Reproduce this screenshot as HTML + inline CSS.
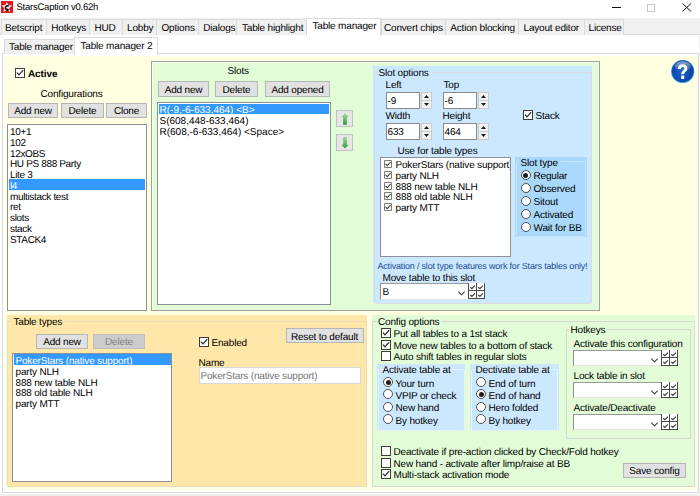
<!DOCTYPE html>
<html><head><meta charset="utf-8"><style>
html,body{margin:0;padding:0;width:700px;height:496px;overflow:hidden;background:#fff;position:relative}
body div{position:absolute;box-sizing:content-box}
svg{display:block}
.t{font-family:"Liberation Sans", sans-serif;font-size:10px;line-height:11px;white-space:nowrap;color:#000;text-rendering:geometricPrecision;letter-spacing:-0.18px}
.tab{background:#F0F0F0;border:1px solid #DADADA;border-bottom:none}
.btn{background:#E1E1E1;border:1px solid #B6B6B6}
.btn.dis{background:#CCCCCC;border-color:#BFBFBF}
.cb{background:#fff;border:1px solid #3c3c3c}
.rd{width:8px;height:8px;border-radius:50%;background:#fff;border:1px solid #505050}
.lb{background:#fff;border:1px solid #8E9096}
.edit{background:#fff;border:1px solid #8A8A8A}
.cmb{background:#fff;border:1px solid #E4E4E4;border-left-color:#8E8E8E;border-top-color:#9A9A9A;border-right:none}
.spin{background:#F2F2F2;border:1px solid #CACACA}
.pnl{border:1px solid #A0A0A0}
.grp{border:1px solid #DCDCDC;border-radius:2px}
</style></head><body>
<div style="left:1px;top:1px;width:12px;height:12px;"><svg width="12" height="12" viewBox="0 0 12 12"><rect width="12" height="12" fill="#E4161E"/><path d="M5.8 0.9 L7.3 4.2 L11.1 4.4 L8.2 7.1 L9.2 10.9 L5.8 9 L2.4 10.9 L3.4 7.1 L0.5 4.4 L4.3 4.2 Z" fill="#fff"/><path d="M7.7 5.3 A2 2 0 1 0 7.9 8.3" stroke="#111" stroke-width="1.6" fill="none"/><circle cx="6.3" cy="8.6" r="1" fill="#111"/></svg></div>
<div class="t" style="left:16.5px;top:2px;font-size:9.5px;letter-spacing:-0.24px">StarsCaption v0.62h</div>
<div style="left:612px;top:7px;width:9px;height:1px;background:#111"></div>
<div style="left:647px;top:4px;width:6px;height:6px;border:1px solid #c8c8c8"></div>
<div style="left:682px;top:3px;width:10px;height:9px;"><svg width="10" height="9" viewBox="0 0 10 9"><path d="M0.5 0.5 L9 8.5 M9 0.5 L0.5 8.5" stroke="#111" stroke-width="1"/></svg></div>
<div style="left:0px;top:18px;width:700px;height:16px;background:#F0F0F0"></div>
<div style="left:0px;top:34px;width:700px;height:1px;background:#DADADA"></div>
<div class="tab" style="left:1px;top:19px;width:44px;height:15px;"></div>
<div class="t" style="left:5.0px;top:23px;">Betscript</div>
<div class="tab" style="left:46px;top:19px;width:42px;height:15px;"></div>
<div class="t" style="left:51.25px;top:23px;">Hotkeys</div>
<div class="tab" style="left:89px;top:19px;width:32px;height:15px;"></div>
<div class="t" style="left:94.5px;top:23px;">HUD</div>
<div class="tab" style="left:122px;top:19px;width:33px;height:15px;"></div>
<div class="t" style="left:127.0px;top:23px;">Lobby</div>
<div class="tab" style="left:156px;top:19px;width:41px;height:15px;"></div>
<div class="t" style="left:161.5px;top:23px;">Options</div>
<div class="tab" style="left:198px;top:19px;width:37px;height:15px;"></div>
<div class="t" style="left:203.25px;top:23px;">Dialogs</div>
<div class="tab" style="left:236px;top:19px;width:70px;height:15px;"></div>
<div class="t" style="left:242.0px;top:23px;">Table highlight</div>
<div class="tab" style="left:381px;top:19px;width:63px;height:15px;"></div>
<div class="t" style="left:384.0px;top:23px;">Convert chips</div>
<div class="tab" style="left:445px;top:19px;width:72px;height:15px;"></div>
<div class="t" style="left:450.25px;top:23px;">Action blocking</div>
<div class="tab" style="left:518px;top:19px;width:65px;height:15px;"></div>
<div class="t" style="left:523.5px;top:23px;">Layout editor</div>
<div class="tab" style="left:584px;top:19px;width:38px;height:15px;"></div>
<div class="t" style="left:588.5px;top:23px;">License</div>
<div style="left:306px;top:18px;width:73px;height:17px;background:#fff;border:1px solid #DADADA;border-bottom:none"></div>
<div class="t" style="left:312.5px;top:21px;">Table manager</div>
<div style="left:2px;top:53px;width:695px;height:438px;border:1px solid #DADADA;background:#fff"></div>
<div class="tab" style="left:4px;top:39px;width:69px;height:14px;"></div>
<div class="t" style="left:9.0px;top:42px;">Table manager</div>
<div style="left:74px;top:37px;width:82px;height:17px;background:#fff;border:1px solid #DADADA;border-bottom:none"></div>
<div class="t" style="left:80.5px;top:41px;">Table manager 2</div>
<div style="left:5px;top:56px;width:692px;height:434px;background:#FFFFE1"></div>
<div style="left:671px;top:60px;width:24px;height:24px;"><svg width="24" height="24" viewBox="0 0 24 24"><defs><radialGradient id="hg" cx="0.45" cy="0.6" r="0.6"><stop offset="0" stop-color="#1d62c4"/><stop offset="0.75" stop-color="#0a46a8"/><stop offset="1" stop-color="#083a8a"/></radialGradient><linearGradient id="hl" x1="0" y1="0" x2="0" y2="1"><stop offset="0" stop-color="#fff" stop-opacity="0.55"/><stop offset="1" stop-color="#fff" stop-opacity="0"/></linearGradient></defs><circle cx="11.7" cy="11.5" r="11.6" fill="#3aa0e0"/><circle cx="11.7" cy="11.3" r="10.8" fill="url(#hg)"/><ellipse cx="11.7" cy="6.5" rx="8" ry="5.2" fill="url(#hl)"/><path d="M6.8 9 C6.8 5.6 9.3 4.3 11.8 4.3 C14.6 4.3 16.4 6.1 16.4 8.4 C16.4 11.2 13.2 11.6 13.2 14.2 L10.3 14.2 C10.3 10.6 13.4 10.3 13.4 8.5 C13.4 7.6 12.7 7 11.8 7 C10.6 7 9.9 7.8 9.9 9 Z" fill="#fff"/><rect x="10.2" y="15.6" width="3" height="3.4" fill="#fff"/></svg></div>
<div class="cb" style="left:14.5px;top:68px;width:8px;height:8px;"><svg width="8" height="8" viewBox="0 0 8 8" style="position:absolute;left:0;top:0"><path d="M1 3.6 L3 5.8 L7.2 1.2" fill="none" stroke="#2a2a2a" stroke-width="1.25"/></svg></div>
<div class="t" style="left:28.0px;top:69px;font-weight:bold;letter-spacing:-0.1px">Active</div>
<div class="t" style="left:40.5px;top:89px;">Configurations</div>
<div class="btn" style="left:8px;top:103px;width:48px;height:13px;"></div>
<div class="t" style="left:8px;top:106px;width:50px;text-align:center;">Add new</div>
<div class="btn" style="left:61px;top:103px;width:41px;height:13px;"></div>
<div class="t" style="left:61px;top:106px;width:43px;text-align:center;">Delete</div>
<div class="btn" style="left:106px;top:103px;width:39px;height:13px;"></div>
<div class="t" style="left:106px;top:106px;width:41px;text-align:center;">Clone</div>
<div class="lb" style="left:7px;top:124px;width:138px;height:185px;"></div>
<div class="t" style="left:10.0px;top:127px;letter-spacing:-0.35px">10+1</div>
<div class="t" style="left:10.0px;top:138px;letter-spacing:-0.35px">102</div>
<div class="t" style="left:10.0px;top:149px;letter-spacing:-0.35px">12xOBS</div>
<div class="t" style="left:10.0px;top:159px;letter-spacing:-0.35px">HU PS 888 Party</div>
<div class="t" style="left:10.0px;top:170px;letter-spacing:-0.35px">Lite 3</div>
<div style="left:9px;top:179px;width:136px;height:11px;background:#3399FF"></div>
<div class="t" style="left:10.0px;top:181px;color:#fff;letter-spacing:-0.35px">l4</div>
<div class="t" style="left:10.0px;top:192px;letter-spacing:-0.35px">multistack test</div>
<div class="t" style="left:10.0px;top:202px;letter-spacing:-0.35px">ret</div>
<div class="t" style="left:10.0px;top:213px;letter-spacing:-0.35px">slots</div>
<div class="t" style="left:10.0px;top:224px;letter-spacing:-0.35px">stack</div>
<div class="t" style="left:10.0px;top:235px;letter-spacing:-0.35px">STACK4</div>
<div class="pnl" style="left:151px;top:61px;width:447px;height:248px;background:#E1FCD6;box-shadow:inset 1px 1px 0 #F4FFEE"></div>
<div class="t" style="left:227.5px;top:66px;">Slots</div>
<div class="btn" style="left:158px;top:81px;width:49px;height:14px;"></div>
<div class="t" style="left:158px;top:85px;width:51px;text-align:center;">Add new</div>
<div class="btn" style="left:215px;top:81px;width:41px;height:14px;"></div>
<div class="t" style="left:215px;top:85px;width:43px;text-align:center;">Delete</div>
<div class="btn" style="left:265px;top:81px;width:63px;height:14px;"></div>
<div class="t" style="left:265px;top:85px;width:65px;text-align:center;">Add opened</div>
<div class="lb" style="left:157px;top:102px;width:172px;height:200.5px;"></div>
<div style="left:159px;top:103.5px;width:170px;height:10.5px;background:#3399FF"></div>
<div class="t" style="left:159.5px;top:105px;color:#fff;letter-spacing:0px">R(-9,-6-633,464) &lt;B&gt;</div>
<div class="t" style="left:159.5px;top:116px;letter-spacing:0px">S(608,448-633,464)</div>
<div class="t" style="left:159.5px;top:127px;letter-spacing:0px">R(608,-6-633,464) &lt;Space&gt;</div>
<div style="left:0;top:0;width:0;height:0"><svg width="0" height="0"><defs><linearGradient id="ag" x1="0" y1="0" x2="0" y2="1"><stop offset="0" stop-color="#9ddc9a"/><stop offset="1" stop-color="#2f9a45"/></linearGradient><linearGradient id="ag2" x1="0" y1="1" x2="0" y2="0"><stop offset="0" stop-color="#9ddc9a"/><stop offset="1" stop-color="#2f9a45"/></linearGradient></defs></svg></div>
<div class="btn" style="left:336px;top:110px;width:15px;height:15px;background:#E6E6E6;border-color:#C2C2C2"></div>
<div style="left:340px;top:113px;width:10px;height:12px;"><svg width="10" height="12" viewBox="0 0 10 12"><path d="M1.4 4 L5 0.3 L8.6 4 L6.9 4 L6.9 11.3 Q6.9 11.8 6.4 11.8 L3.6 11.8 Q3.1 11.8 3.1 11.3 L3.1 4 Z" fill="url(#ag)"/></svg></div>
<div class="btn" style="left:336px;top:134px;width:15px;height:15px;background:#E6E6E6;border-color:#C2C2C2"></div>
<div style="left:340px;top:137px;width:10px;height:12px;"><svg width="10" height="12" viewBox="0 0 10 12"><path d="M1.4 7.8 L5 11.5 L8.6 7.8 L6.9 7.8 L6.9 0.5 Q6.9 0 6.4 0 L3.6 0 Q3.1 0 3.1 0.5 L3.1 7.8 Z" fill="url(#ag)"/></svg></div>
<div style="left:373px;top:66px;width:219px;height:237px;background:#CCE8FF"></div>
<div class="grp" style="left:374px;top:72px;width:216px;height:230px;"></div>
<div style="left:377px;top:67px;width:55px;height:10px;background:#CCE8FF"></div>
<div class="t" style="left:378.5px;top:68px;">Slot options</div>
<div class="t" style="left:385.5px;top:80px;">Left</div>
<div class="t" style="left:443.5px;top:80px;">Top</div>
<div class="edit" style="left:386px;top:92px;width:32px;height:15px;"></div>
<div class="t" style="left:387.5px;top:96px;">-9</div>
<div class="spin" style="left:421px;top:92px;width:9px;height:7px;"><svg width="5" height="3" style="position:absolute;left:2.0px;top:2.0px"><path d="M0 3 L2.5 0 L5 3 Z" fill="#1a1a1a"/></svg></div>
<div class="spin" style="left:421px;top:100px;width:9px;height:7px;"><svg width="5" height="3" style="position:absolute;left:2.0px;top:2.0px"><path d="M0 0 L2.5 3 L5 0 Z" fill="#1a1a1a"/></svg></div>
<div class="edit" style="left:443px;top:92px;width:32px;height:15px;"></div>
<div class="t" style="left:444.5px;top:96px;">-6</div>
<div class="spin" style="left:478px;top:92px;width:9px;height:7px;"><svg width="5" height="3" style="position:absolute;left:2.0px;top:2.0px"><path d="M0 3 L2.5 0 L5 3 Z" fill="#1a1a1a"/></svg></div>
<div class="spin" style="left:478px;top:100px;width:9px;height:7px;"><svg width="5" height="3" style="position:absolute;left:2.0px;top:2.0px"><path d="M0 0 L2.5 3 L5 0 Z" fill="#1a1a1a"/></svg></div>
<div class="t" style="left:385.5px;top:111px;">Width</div>
<div class="t" style="left:442.5px;top:111px;">Height</div>
<div class="edit" style="left:386px;top:123px;width:32px;height:15px;"></div>
<div class="t" style="left:387.5px;top:127px;">633</div>
<div class="spin" style="left:421px;top:123px;width:9px;height:7px;"><svg width="5" height="3" style="position:absolute;left:2.0px;top:2.0px"><path d="M0 3 L2.5 0 L5 3 Z" fill="#1a1a1a"/></svg></div>
<div class="spin" style="left:421px;top:131px;width:9px;height:7px;"><svg width="5" height="3" style="position:absolute;left:2.0px;top:2.0px"><path d="M0 0 L2.5 3 L5 0 Z" fill="#1a1a1a"/></svg></div>
<div class="edit" style="left:443px;top:123px;width:32px;height:15px;"></div>
<div class="t" style="left:444.5px;top:127px;">464</div>
<div class="spin" style="left:478px;top:123px;width:9px;height:7px;"><svg width="5" height="3" style="position:absolute;left:2.0px;top:2.0px"><path d="M0 3 L2.5 0 L5 3 Z" fill="#1a1a1a"/></svg></div>
<div class="spin" style="left:478px;top:131px;width:9px;height:7px;"><svg width="5" height="3" style="position:absolute;left:2.0px;top:2.0px"><path d="M0 0 L2.5 3 L5 0 Z" fill="#1a1a1a"/></svg></div>
<div class="cb" style="left:523px;top:109.5px;width:8px;height:8px;"><svg width="8" height="8" viewBox="0 0 8 8" style="position:absolute;left:0;top:0"><path d="M1 3.6 L3 5.8 L7.2 1.2" fill="none" stroke="#2a2a2a" stroke-width="1.25"/></svg></div>
<div class="t" style="left:535.5px;top:111px;">Stack</div>
<div class="t" style="left:397.5px;top:146px;">Use for table types</div>
<div class="lb" style="left:380px;top:157px;width:129px;height:98px;"></div>
<div style="left:381px;top:158px;width:129px;height:60px;overflow:hidden">
<div style="left:3px;top:2px;width:8px;height:8px;"><svg width="8" height="8" viewBox="0 0 8 8"><path d="M0.5 0.5 H7.5 V7.5 H0.5 Z" fill="#fff" stroke="#7a7a7a" stroke-width="1"/><path d="M1.6 3.9 L3.3 5.6 L6.6 2" fill="none" stroke="#3a3a3a" stroke-width="1.1"/></svg></div>
<div class="t" style="left:14.5px;top:2px;">PokerStars (native support)</div>
<div style="left:3px;top:13px;width:8px;height:8px;"><svg width="8" height="8" viewBox="0 0 8 8"><path d="M0.5 0.5 H7.5 V7.5 H0.5 Z" fill="#fff" stroke="#7a7a7a" stroke-width="1"/><path d="M1.6 3.9 L3.3 5.6 L6.6 2" fill="none" stroke="#3a3a3a" stroke-width="1.1"/></svg></div>
<div class="t" style="left:14.5px;top:13px;">party NLH</div>
<div style="left:3px;top:24px;width:8px;height:8px;"><svg width="8" height="8" viewBox="0 0 8 8"><path d="M0.5 0.5 H7.5 V7.5 H0.5 Z" fill="#fff" stroke="#7a7a7a" stroke-width="1"/><path d="M1.6 3.9 L3.3 5.6 L6.6 2" fill="none" stroke="#3a3a3a" stroke-width="1.1"/></svg></div>
<div class="t" style="left:14.5px;top:24px;">888 new table NLH</div>
<div style="left:3px;top:34px;width:8px;height:8px;"><svg width="8" height="8" viewBox="0 0 8 8"><path d="M0.5 0.5 H7.5 V7.5 H0.5 Z" fill="#fff" stroke="#7a7a7a" stroke-width="1"/><path d="M1.6 3.9 L3.3 5.6 L6.6 2" fill="none" stroke="#3a3a3a" stroke-width="1.1"/></svg></div>
<div class="t" style="left:14.5px;top:34px;">888 old table NLH</div>
<div style="left:3px;top:45px;width:8px;height:8px;"><svg width="8" height="8" viewBox="0 0 8 8"><path d="M0.5 0.5 H7.5 V7.5 H0.5 Z" fill="#fff" stroke="#7a7a7a" stroke-width="1"/><path d="M1.6 3.9 L3.3 5.6 L6.6 2" fill="none" stroke="#3a3a3a" stroke-width="1.1"/></svg></div>
<div class="t" style="left:14.5px;top:45px;">party MTT</div>
</div>
<div style="left:515px;top:157px;width:71.5px;height:80px;background:#A9D8FA"></div>
<div class="grp" style="left:516px;top:161px;width:68px;height:74px;border-color:#c8e4f8"></div>
<div style="left:519px;top:157px;width:42px;height:10px;background:#A9D8FA"></div>
<div class="t" style="left:520.5px;top:158px;">Slot type</div>
<div class="rd" style="left:520.5px;top:170.10000000000002px;"><div style="position:absolute;left:1.5px;top:1.5px;width:5px;height:5px;border-radius:50%;background:#1e1e1e"></div></div>
<div class="t" style="left:533.5px;top:171px;">Regular</div>
<div class="rd" style="left:520.5px;top:183.10000000000002px;"></div>
<div class="t" style="left:533.5px;top:184px;">Observed</div>
<div class="rd" style="left:520.5px;top:196.10000000000002px;"></div>
<div class="t" style="left:533.5px;top:197px;">Sitout</div>
<div class="rd" style="left:520.5px;top:209.10000000000002px;"></div>
<div class="t" style="left:533.5px;top:210px;">Activated</div>
<div class="rd" style="left:520.5px;top:222.10000000000002px;"></div>
<div class="t" style="left:533.5px;top:223px;">Wait for BB</div>
<div class="t" style="left:377.5px;top:261px;color:#1B4D96;font-size:9px;letter-spacing:-0.19px">Activation / slot type features work for Stars tables only!</div>
<div class="t" style="left:382.5px;top:273px;">Move table to this slot</div>
<div class="cmb" style="left:380px;top:283px;width:87px;height:15px;"><svg width="7" height="5" viewBox="0 0 7 5" style="position:absolute;right:3px;top:7px"><path d="M0.3 0.6 L3.5 3.8 L6.7 0.6" fill="none" stroke="#3a3a3a" stroke-width="1.1"/></svg></div>
<div class="t" style="left:382.5px;top:287px;">B</div>
<div style="left:468px;top:283px;width:17px;height:16px;"><svg width="18" height="16" viewBox="0 0 18 16" style="position:absolute;left:0;top:0">
<rect x="0.5" y="0" width="16" height="15.5" fill="#fff"/>
<path d="M0.5 0 V16 M8.5 0 V16 M16.5 0 V16 M0 7.5 H17 M0 15.5 H17" stroke="#4a4a4a" stroke-width="1" fill="none"/>
<path d="M2.3 4.2 L3.9 5.6 L6.9 2.6 M10.3 4.2 L11.9 5.6 L14.9 2.6 M2.3 12 L3.9 13.4 L6.9 10.4 M10.3 12 L11.9 13.4 L14.9 10.4" stroke="#404040" stroke-width="1.15" fill="none"/>
</svg></div>
<div style="left:7px;top:314.5px;width:360px;height:171.5px;background:#FFE7A9"></div>
<div class="grp" style="left:7px;top:321px;width:358px;height:164px;border-color:#E6DCC0;border-radius:1px"></div>
<div style="left:12px;top:316px;width:53px;height:10px;background:#FFE7A9"></div>
<div class="t" style="left:13.5px;top:317px;">Table types</div>
<div class="btn" style="left:36px;top:334px;width:50px;height:13px;"></div>
<div class="t" style="left:36px;top:337px;width:52px;text-align:center;">Add new</div>
<div class="btn dis" style="left:93px;top:334px;width:50px;height:13px;"></div>
<div class="t" style="left:93px;top:337px;width:52px;text-align:center;color:#838383;">Delete</div>
<div class="lb" style="left:12px;top:353px;width:158px;height:127px;"></div>
<div style="left:14px;top:354px;width:157px;height:11px;background:#3399FF"></div>
<div class="t" style="left:15.5px;top:356px;color:#fff">PokerStars (native support)</div>
<div class="t" style="left:15.5px;top:367px;">party NLH</div>
<div class="t" style="left:15.5px;top:378px;">888 new table NLH</div>
<div class="t" style="left:15.5px;top:388px;">888 old table NLH</div>
<div class="t" style="left:15.5px;top:399px;">party MTT</div>
<div class="cb" style="left:199px;top:337px;width:8px;height:8px;"><svg width="8" height="8" viewBox="0 0 8 8" style="position:absolute;left:0;top:0"><path d="M1 3.6 L3 5.8 L7.2 1.2" fill="none" stroke="#2a2a2a" stroke-width="1.25"/></svg></div>
<div class="t" style="left:211.5px;top:338px;">Enabled</div>
<div class="btn" style="left:285.5px;top:328px;width:76px;height:12.5px;"></div>
<div class="t" style="left:285.5px;top:332px;width:78px;text-align:center;">Reset to default</div>
<div class="t" style="left:198.5px;top:358px;">Name</div>
<div class="edit" style="left:199px;top:367px;width:160px;height:15px;border-color:#d8d8d8"></div>
<div class="t" style="left:200.5px;top:371px;color:#747474">PokerStars (native support)</div>
<div style="left:372px;top:315px;width:323px;height:172px;background:#E1FCD6"></div>
<div class="grp" style="left:372px;top:321px;width:321px;height:164px;border-color:#D4D8D2;border-radius:1px"></div>
<div style="left:377px;top:316px;width:64px;height:10px;background:#E1FCD6"></div>
<div class="t" style="left:378.0px;top:317px;">Config options</div>
<div class="cb" style="left:381px;top:328px;width:8px;height:8px;"><svg width="8" height="8" viewBox="0 0 8 8" style="position:absolute;left:0;top:0"><path d="M1 3.6 L3 5.8 L7.2 1.2" fill="none" stroke="#2a2a2a" stroke-width="1.25"/></svg></div>
<div class="t" style="left:393.5px;top:329px;">Put all tables to a 1st stack</div>
<div class="cb" style="left:381px;top:339.5px;width:8px;height:8px;"><svg width="8" height="8" viewBox="0 0 8 8" style="position:absolute;left:0;top:0"><path d="M1 3.6 L3 5.8 L7.2 1.2" fill="none" stroke="#2a2a2a" stroke-width="1.25"/></svg></div>
<div class="t" style="left:393.5px;top:341px;">Move new tables to a bottom of stack</div>
<div class="cb" style="left:381px;top:351px;width:8px;height:8px;"></div>
<div class="t" style="left:393.5px;top:352px;">Auto shift tables in regular slots</div>
<div style="left:377px;top:364px;width:88px;height:65.5px;background:#CCE8FF"></div>
<div class="grp" style="left:378px;top:369px;width:85px;height:60px;border-color:#e4f2fc"></div>
<div class="t" style="left:382.5px;top:365px;">Activate table at</div>
<div class="rd" style="left:383px;top:377.3px;"><div style="position:absolute;left:1.5px;top:1.5px;width:5px;height:5px;border-radius:50%;background:#1e1e1e"></div></div>
<div class="t" style="left:395.5px;top:379px;">Your turn</div>
<div class="rd" style="left:383px;top:389.47px;"></div>
<div class="t" style="left:395.5px;top:391px;">VPIP or check</div>
<div class="rd" style="left:383px;top:401.64px;"></div>
<div class="t" style="left:395.5px;top:403px;">New hand</div>
<div class="rd" style="left:383px;top:413.81px;"></div>
<div class="t" style="left:395.5px;top:416px;">By hotkey</div>
<div style="left:470px;top:364px;width:89px;height:65.5px;background:#CCE8FF"></div>
<div class="grp" style="left:471px;top:369px;width:85px;height:60px;border-color:#e4f2fc"></div>
<div class="t" style="left:475.5px;top:365px;">Dectivate table at</div>
<div class="rd" style="left:476px;top:377.3px;"></div>
<div class="t" style="left:488.5px;top:379px;">End of turn</div>
<div class="rd" style="left:476px;top:389.47px;"><div style="position:absolute;left:1.5px;top:1.5px;width:5px;height:5px;border-radius:50%;background:#1e1e1e"></div></div>
<div class="t" style="left:488.5px;top:391px;">End of hand</div>
<div class="rd" style="left:476px;top:401.64px;"></div>
<div class="t" style="left:488.5px;top:403px;">Hero folded</div>
<div class="rd" style="left:476px;top:413.81px;"></div>
<div class="t" style="left:488.5px;top:416px;">By hotkey</div>
<div class="grp" style="left:566px;top:329px;width:123px;height:108px;border-color:#D4D8D2;border-radius:1px"></div>
<div style="left:569px;top:325px;width:38px;height:10px;background:#E1FCD6"></div>
<div class="t" style="left:570.5px;top:325px;">Hotkeys</div>
<div class="t" style="left:573.5px;top:339px;">Activate this configuration</div>
<div class="cmb" style="left:573px;top:350px;width:87px;height:14px;"><svg width="7" height="5" viewBox="0 0 7 5" style="position:absolute;right:3px;top:7px"><path d="M0.3 0.6 L3.5 3.8 L6.7 0.6" fill="none" stroke="#3a3a3a" stroke-width="1.1"/></svg></div>
<div style="left:661px;top:350px;width:17px;height:16px;"><svg width="18" height="16" viewBox="0 0 18 16" style="position:absolute;left:0;top:0">
<rect x="0.5" y="0" width="16" height="15.5" fill="#fff"/>
<path d="M0.5 0 V16 M8.5 0 V16 M16.5 0 V16 M0 7.5 H17 M0 15.5 H17" stroke="#4a4a4a" stroke-width="1" fill="none"/>
<path d="M2.3 4.2 L3.9 5.6 L6.9 2.6 M10.3 4.2 L11.9 5.6 L14.9 2.6 M2.3 12 L3.9 13.4 L6.9 10.4 M10.3 12 L11.9 13.4 L14.9 10.4" stroke="#404040" stroke-width="1.15" fill="none"/>
</svg></div>
<div class="t" style="left:573.5px;top:371px;">Lock table in slot</div>
<div class="cmb" style="left:573px;top:382px;width:87px;height:14px;"><svg width="7" height="5" viewBox="0 0 7 5" style="position:absolute;right:3px;top:7px"><path d="M0.3 0.6 L3.5 3.8 L6.7 0.6" fill="none" stroke="#3a3a3a" stroke-width="1.1"/></svg></div>
<div style="left:661px;top:382px;width:17px;height:16px;"><svg width="18" height="16" viewBox="0 0 18 16" style="position:absolute;left:0;top:0">
<rect x="0.5" y="0" width="16" height="15.5" fill="#fff"/>
<path d="M0.5 0 V16 M8.5 0 V16 M16.5 0 V16 M0 7.5 H17 M0 15.5 H17" stroke="#4a4a4a" stroke-width="1" fill="none"/>
<path d="M2.3 4.2 L3.9 5.6 L6.9 2.6 M10.3 4.2 L11.9 5.6 L14.9 2.6 M2.3 12 L3.9 13.4 L6.9 10.4 M10.3 12 L11.9 13.4 L14.9 10.4" stroke="#404040" stroke-width="1.15" fill="none"/>
</svg></div>
<div class="t" style="left:573.5px;top:403px;">Activate/Deactivate</div>
<div class="cmb" style="left:573px;top:414px;width:87px;height:14px;"><svg width="7" height="5" viewBox="0 0 7 5" style="position:absolute;right:3px;top:7px"><path d="M0.3 0.6 L3.5 3.8 L6.7 0.6" fill="none" stroke="#3a3a3a" stroke-width="1.1"/></svg></div>
<div style="left:661px;top:414px;width:17px;height:16px;"><svg width="18" height="16" viewBox="0 0 18 16" style="position:absolute;left:0;top:0">
<rect x="0.5" y="0" width="16" height="15.5" fill="#fff"/>
<path d="M0.5 0 V16 M8.5 0 V16 M16.5 0 V16 M0 7.5 H17 M0 15.5 H17" stroke="#4a4a4a" stroke-width="1" fill="none"/>
<path d="M2.3 4.2 L3.9 5.6 L6.9 2.6 M10.3 4.2 L11.9 5.6 L14.9 2.6 M2.3 12 L3.9 13.4 L6.9 10.4 M10.3 12 L11.9 13.4 L14.9 10.4" stroke="#404040" stroke-width="1.15" fill="none"/>
</svg></div>
<div class="cb" style="left:381px;top:446px;width:8px;height:8px;"></div>
<div class="t" style="left:393.5px;top:447px;">Deactivate if pre-action clicked by Check/Fold hotkey</div>
<div class="cb" style="left:381px;top:457.5px;width:8px;height:8px;"></div>
<div class="t" style="left:393.5px;top:459px;">New hand - activate after limp/raise at BB</div>
<div class="cb" style="left:381px;top:469px;width:8px;height:8px;"><svg width="8" height="8" viewBox="0 0 8 8" style="position:absolute;left:0;top:0"><path d="M1 3.6 L3 5.8 L7.2 1.2" fill="none" stroke="#2a2a2a" stroke-width="1.25"/></svg></div>
<div class="t" style="left:393.5px;top:470px;">Multi-stack activation mode</div>
<div class="btn" style="left:623px;top:463px;width:61px;height:13px;"></div>
<div class="t" style="left:623px;top:466px;width:63px;text-align:center;">Save config</div>
<div style="left:0px;top:494px;width:700px;height:2px;background:#F0F0F0"></div>
<div style="left:699px;top:35px;width:1px;height:461px;background:#F2F2F2"></div>
<div style="left:697px;top:54px;width:1px;height:438px;background:#F3F3F3"></div>
<div style="left:698px;top:53px;width:1px;height:440px;background:#DEDEDE"></div>
</body></html>
